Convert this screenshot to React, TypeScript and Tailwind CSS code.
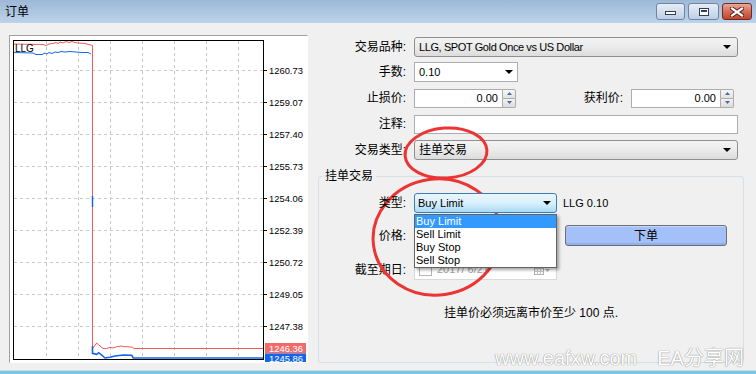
import React from "react";

// --- chart data (page coordinates, the svg viewBox is offset to match) ---
const GRID_Y = [70.5, 102.5, 134.5, 166.5, 198.5, 230.5, 262.5, 294.5, 326.5];
const PRICES = ["1260.73", "1259.07", "1257.40", "1255.73", "1254.06", "1252.39", "1250.72", "1249.05", "1247.38"];
const GRID_X = [46.5, 78.5, 110.5, 142.5, 174.5, 206.5, 238.5];

const ASK_TOP =
  "M13,44 L43,44.5 L46,45.5 L49,44 L53,43.5 L56,42.5 L58,43.5 L60,42 L63,43 L66,41.5 L69,42.5 L72,41.5 L75,42.5 L78,43 L85,43.5 L89,44.5 L92.5,45.5 L92.5,348";
const ASK_BOTTOM =
  "M93,348 L96.7,343 L100,346 L103,348.5 L106.7,348.5 L110,347.3 L113,348 L116.7,346.7 L121.7,346 L124,346.7 L128,346.7 L132.7,347.3 L134,348.5 L263,348.5";
const BID_TOP =
  "M13,52.5 L33,53 L36,54.5 L42,54.5 L45,53 L47,54 L49,52.5 L52,53.5 L55,52 L58,52.5 L61,51.5 L65,52 L70,51.5 L76,52 L82,52.5 L88,52.5 L91,54";
const BID_BOTTOM =
  "M92.5,346 L92.5,353.3 L96.7,354.3 L98.7,352.7 L101.7,355 L105,358 L110,357.3 L115,356 L123.3,355 L131.7,355.3 L133.3,358 L263,358";

const LABEL_FONT = "'Liberation Sans', Arial, sans-serif";

function Chart() {
  return (
    <div className="h-[328px] w-[299px] border border-[#a0a0a0] border-b-white border-r-white bg-white">
      <svg width="297" height="326" viewBox="10 36 297 326" className="block">
        {/* grid */}
        {GRID_Y.map((y) => (
          <line key={y} x1="14" x2="263" y1={y} y2={y} stroke="#c8c8c8" strokeDasharray="3 3" />
        ))}
        {GRID_X.map((x) => (
          <line key={x} x1={x} x2={x} y1="41" y2="359" stroke="#c8c8c8" strokeDasharray="3 3" />
        ))}

        {/* price lines */}
        <path d={ASK_TOP} fill="none" stroke="#f25a5a" strokeWidth="1" />
        <path d={ASK_BOTTOM} fill="none" stroke="#f25a5a" strokeWidth="1" />
        <path d={BID_TOP} fill="none" stroke="#1565e8" strokeWidth="1" />
        <path d={BID_BOTTOM} fill="none" stroke="#1565e8" strokeWidth="1.6" />
        <line x1="92.5" x2="92.5" y1="196" y2="207" stroke="#1565e8" strokeWidth="1.5" />

        {/* frame */}
        <rect x="13.5" y="40.5" width="250" height="319" fill="none" stroke="#000" />
        <text x="15" y="51.5" fontSize="10" fontFamily={LABEL_FONT} fill="#000">
          LLG
        </text>

        {/* axis */}
        {GRID_Y.map((y, i) => (
          <g key={y}>
            <line x1="263" x2="267" y1={y} y2={y} stroke="#000" />
            <text x="269" y={y + 3.6} fontSize="9.4" fontFamily={LABEL_FONT} fill="#000">
              {PRICES[i]}
            </text>
          </g>
        ))}
        <rect x="265" y="343" width="41" height="10.5" fill="#f26b6b" />
        <text x="269" y="351.6" fontSize="9.4" fontFamily={LABEL_FONT} fill="#fff">
          1246.36
        </text>
        <rect x="265" y="353.5" width="41" height="10" fill="#1565e8" />
        <text x="269" y="362" fontSize="9.4" fontFamily={LABEL_FONT} fill="#fff">
          1245.86
        </text>
      </svg>
    </div>
  );
}

function DropArrow() {
  return (
    <svg width="8" height="4" viewBox="0 0 8 4" className="block">
      <path d="M0 0h8L4 4z" fill="#000" />
    </svg>
  );
}

function SpinButtons() {
  return (
    <div className="flex w-[14px] flex-col">
      <div className="flex h-[10px] items-center justify-center rounded-tr-[2px] border border-[#acacac] bg-linear-to-b from-[#f7f7f7] to-[#e2e2e2]">
        <svg width="5" height="3" viewBox="0 0 5 3" className="block">
          <path d="M0 3h5L2.5 0z" fill="#4a6aa5" />
        </svg>
      </div>
      <div className="flex h-[9px] items-center justify-center rounded-br-[2px] border border-t-0 border-[#acacac] bg-linear-to-b from-[#f2f2f2] to-[#dcdcdc]">
        <svg width="5" height="3" viewBox="0 0 5 3" className="block">
          <path d="M0 0h5L2.5 3z" fill="#4a6aa5" />
        </svg>
      </div>
    </div>
  );
}

function SpinInput({ className }: { className: string }) {
  return (
    <div className={`flex h-[19px] ${className}`}>
      <div className="flex flex-1 items-center justify-end border border-r-0 border-[#abadb3] bg-white pr-[4px] text-[11px]">
        0.00
      </div>
      <SpinButtons />
    </div>
  );
}

function Combo({ value, textClass }: { value: string; textClass: string }) {
  return (
    <div className="ml-[8px] flex h-[20px] w-[324px] items-center rounded-[3px] border border-[#8e8f8f] bg-linear-to-b from-[#f3f3f3] via-[#ebebeb] to-[#dcdcdc] pl-[4px] pr-[6px]">
      <span className={`flex-1 leading-none ${textClass}`}>{value}</span>
      <DropArrow />
    </div>
  );
}

function Label({ children, className }: { children: React.ReactNode; className: string }) {
  return <span className={`shrink-0 text-right text-[12px] leading-none ${className}`}>{children}</span>;
}

function WindowButtons() {
  return (
    <div className="ml-auto flex gap-[3px] self-start pr-[4px] pt-[3px]">
      <div className="flex h-[17px] w-[29px] items-end justify-center rounded-[3px] border border-[#6f85a3] bg-linear-to-b from-[#e6edf6] via-[#d3dfed] to-[#bccee4] pb-[4px]">
        <div className="h-[4px] w-[11px] border border-[#2f3f57] bg-white" />
      </div>
      <div className="flex h-[17px] w-[31px] items-center justify-center rounded-[3px] border border-[#6f85a3] bg-linear-to-b from-[#e6edf6] via-[#d3dfed] to-[#bccee4]">
        <div className="h-[8px] w-[10px] border border-[#2f3f57] bg-white p-[1px]">
          <div className="h-full w-full border-t-2 border-[#2f3f57]" />
        </div>
      </div>
      <div className="flex h-[17px] w-[30px] items-center justify-center rounded-[3px] border border-[#6b2b20] bg-linear-to-b from-[#eaa797] via-[#d66c56] to-[#c4452e]">
        <svg width="14" height="10" viewBox="0 0 14 10" className="block">
          <path d="M2 1.5L12 8.5M12 1.5L2 8.5" stroke="#4a1d15" strokeWidth="4" strokeLinecap="square" />
          <path d="M2 1.5L12 8.5M12 1.5L2 8.5" stroke="#fff" strokeWidth="2.2" strokeLinecap="square" />
        </svg>
      </div>
    </div>
  );
}

function PendingGroup() {
  return (
    <fieldset className="ml-[2px] mt-[8px] h-[195px] w-[426px] rounded-[3px] border border-[#d5dfe5] pt-[9px]">
      <legend className="ml-[3px] px-[3px] text-[12px] leading-[16px]">挂单交易</legend>

      {/* type */}
      <div className="relative z-10 flex h-[20px] items-center">
        <Label className="w-[87px]">类型:</Label>
        <div className="relative ml-[8px] w-[143px]">
          <div className="flex h-[20px] items-center rounded-[3px] border border-[#3c7fb1] bg-linear-to-b from-[#eaf6fd] via-[#d9f0fc] to-[#a9daf6] pl-[3px] pr-[5px]">
            <span className="flex-1 text-[11px] leading-none">Buy Limit</span>
            <DropArrow />
          </div>
          <div className="absolute left-0 top-[21px] w-[143px] border border-[#646464] bg-white shadow-[2px_2px_3px_rgba(0,0,0,0.35)]">
            {["Buy Limit", "Sell Limit", "Buy Stop", "Sell Stop"].map((item, i) => (
              <div
                key={item}
                className={`h-[13px] pl-[1px] text-[11px] leading-[13px] ${i === 0 ? "bg-[#3399ff] text-white" : "text-black"}`}
              >
                {item}
              </div>
            ))}
          </div>
        </div>
        <span className="ml-[6px] text-[11px] leading-none">LLG 0.10</span>
      </div>

      {/* price */}
      <div className="mt-[12px] flex h-[21px] items-center">
        <Label className="w-[87px]">价格:</Label>
        <SpinInput className="ml-[8px] w-[143px]" />
        <div className="ml-[8px] flex h-[21px] w-[162px] items-center justify-center rounded-[3px] border border-[#707070] bg-[#a3c0f8] text-[12px] shadow-[inset_0_1px_0_#c4d7fb,inset_0_-2px_0_#8fb0ef]">
          下单
        </div>
      </div>

      {/* expiry */}
      <div className="mt-[13px] flex h-[21px] items-center">
        <Label className="w-[87px]">截至期日:</Label>
        <div className="ml-[8px] flex h-[21px] w-[143px] items-center border border-[#d9d9d9] bg-white pl-[4px] pr-[6px]">
          <div className="h-[13px] w-[13px] border border-[#b5b5b5] bg-white" />
          <span className="ml-[5px] flex-1 text-[11px] leading-none text-[#a0a0a0]">2017/ 6/21</span>
          <svg width="16" height="10" viewBox="0 0 16 10" className="block">
            <rect x="0.5" y="0.5" width="9" height="9" fill="#fff" stroke="#b0b0b0" />
            <path d="M0.5 3.5h9M0.5 6.5h9M3.5 0.5v9M6.5 0.5v9" stroke="#c8c8c8" />
            <path d="M11 4h5l-2.5 3z" fill="#b0b0b0" />
          </svg>
        </div>
      </div>

      <p className="mt-[26px] text-center text-[12px] leading-[14px]">挂单价必须远离市价至少 100 点.</p>
    </fieldset>
  );
}

export default function App() {
  return (
    <div className="relative h-[374px] w-[756px] overflow-hidden bg-[#f0f0f0] font-['Liberation_Sans','Noto_Sans_CJK_SC',sans-serif] text-black">
      {/* title bar */}
      <div className="flex h-[23px] items-center bg-linear-to-b from-[#9db8d6] to-[#bcd3ea] pl-[5px]">
        <span className="text-[12px] leading-none">订单</span>
        <WindowButtons />
      </div>

      <div className="flex h-[347px]">
        <div className="w-[316px] shrink-0 pl-[9px] pt-[12px]">
          <Chart />
        </div>

        <div className="flex-1 pt-[14px]">
          <div className="flex h-[20px] items-center">
            <Label className="w-[90px]">交易品种:</Label>
            <Combo value="LLG, SPOT Gold Once vs US Dollar" textClass="text-[11px] tracking-[-0.4px]" />
          </div>

          <div className="mt-[5px] flex h-[20px] items-center">
            <Label className="w-[90px]">手数:</Label>
            <div className="ml-[8px] flex h-[20px] w-[104px] items-center border border-[#abadb3] bg-white pl-[4px] pr-[4px]">
              <span className="flex-1 text-[11px] leading-none">0.10</span>
              <DropArrow />
            </div>
          </div>

          <div className="mt-[6px] flex h-[20px] items-center">
            <Label className="w-[90px]">止损价:</Label>
            <SpinInput className="ml-[8px] w-[102px]" />
            <Label className="w-[107px]">获利价:</Label>
            <SpinInput className="ml-[8px] w-[103px]" />
          </div>

          <div className="mt-[6px] flex h-[20px] items-center">
            <Label className="w-[90px]">注释:</Label>
            <div className="ml-[8px] h-[19px] w-[324px] border border-[#abadb3] bg-white" />
          </div>

          <div className="mt-[6px] flex h-[20px] items-center">
            <Label className="w-[90px]">交易类型:</Label>
            <Combo value="挂单交易" textClass="text-[12px]" />
          </div>

          <PendingGroup />
        </div>
      </div>
      <div className="h-[4px] border-t border-[#c9dbe8] bg-[#7ec4e4]" />

      {/* watermark */}
      <div className="absolute left-[495px] top-[347px] flex items-center text-[20px] leading-[22px] text-white [text-shadow:0_0_1px_#8f8f8f,0_0_1px_#8f8f8f]">
        <span>www.eafxw.com</span>
        <span className="ml-[20px]">EA分享网</span>
      </div>

      {/* red annotation circles */}
      <svg className="pointer-events-none absolute left-0 top-0" width="756" height="374" viewBox="0 0 756 374">
        <ellipse cx="446" cy="153" rx="41" ry="25" fill="none" stroke="#ec3434" strokeWidth="3" transform="rotate(-4 446 153)" />
        <ellipse cx="437" cy="237" rx="64" ry="58" fill="none" stroke="#ec3434" strokeWidth="3" transform="rotate(-8 437 237)" />
      </svg>
    </div>
  );
}
